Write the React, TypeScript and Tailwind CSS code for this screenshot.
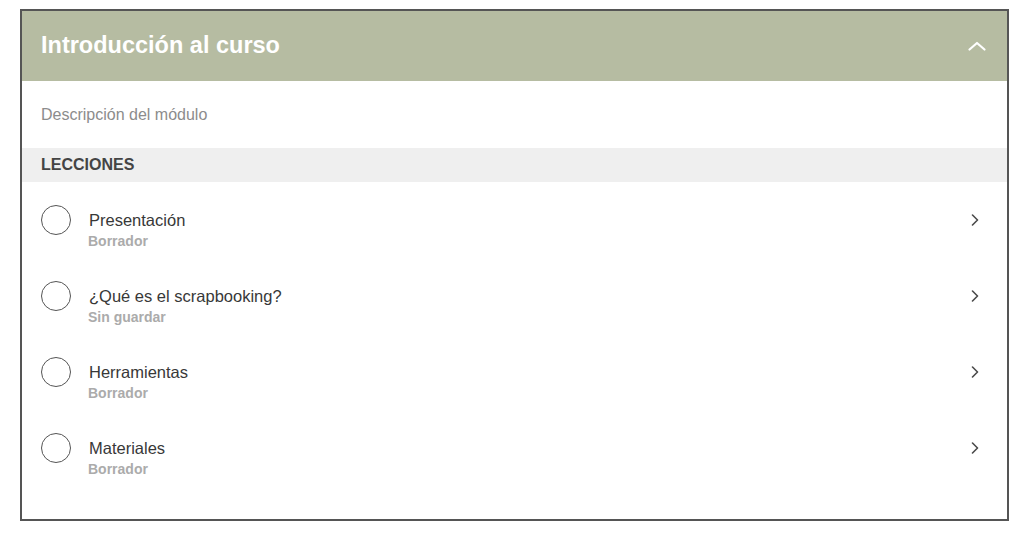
const lessons = [
  { title: "Presentación", status: "Borrador" },
  { title: "¿Qué es el scrapbooking?", status: "Sin guardar" },
  { title: "Herramientas", status: "Borrador" },
  { title: "Materiales", status: "Borrador" },
];

function ChevronUp() {
  return (
    <svg width="18" height="10" viewBox="0 0 18 10" fill="none">
      <path
        d="M1.5 8.5 L9 2 L16.5 8.5"
        stroke="#ffffff"
        strokeWidth="2.2"
        strokeLinecap="round"
        strokeLinejoin="round"
      />
    </svg>
  );
}

function ChevronRight() {
  return (
    <svg width="8" height="12" viewBox="0 0 8 12" fill="none">
      <path
        d="M1.5 1 L6.5 6 L1.5 11"
        stroke="#4a4a4a"
        strokeWidth="1.6"
        strokeLinecap="round"
        strokeLinejoin="round"
      />
    </svg>
  );
}

function LessonRow({ title, status }: { title: string; status: string }) {
  return (
    <div className="flex h-[76px] items-start pl-[19px] pr-[28px] pt-[23px]">
      <div className="h-[30px] w-[30px] shrink-0 rounded-full border border-[#555]" />
      <div className="ml-[17px] min-w-0 flex-1">
        <p className="mt-[5px] pl-[1px] text-[16.5px] leading-[20px] text-[#383838]">
          {title}
        </p>
        <p className="mt-[3px] text-[14px] font-bold leading-[16px] text-[#ababab]">
          {status}
        </p>
      </div>
      <div className="mt-[9px] shrink-0">
        <ChevronRight />
      </div>
    </div>
  );
}

export default function App() {
  return (
    <div className="min-h-[543px] bg-white pl-[20px] pt-[9px] font-['Liberation_Sans',Arial,sans-serif]">
      <div className="w-[989px] border-2 border-[#555] bg-white">
        <header className="flex h-[70px] items-center justify-between bg-[#b6bca2] pl-[19px] pr-[21px]">
          <h1 className="text-[23.5px] font-bold leading-none text-white">
            Introducción al curso
          </h1>
          <ChevronUp />
        </header>

        <div className="flex h-[67px] items-center px-[19px]">
          <p className="text-[16px] text-[#8c8c8c]">Descripción del módulo</p>
        </div>

        <div className="flex h-[34px] items-center bg-[#efefef] px-[19px]">
          <h2 className="text-[16px] font-bold text-[#444]">LECCIONES</h2>
        </div>

        <div className="pb-[33px]">
          {lessons.map((l) => (
            <LessonRow key={l.title} title={l.title} status={l.status} />
          ))}
        </div>
      </div>
    </div>
  );
}
